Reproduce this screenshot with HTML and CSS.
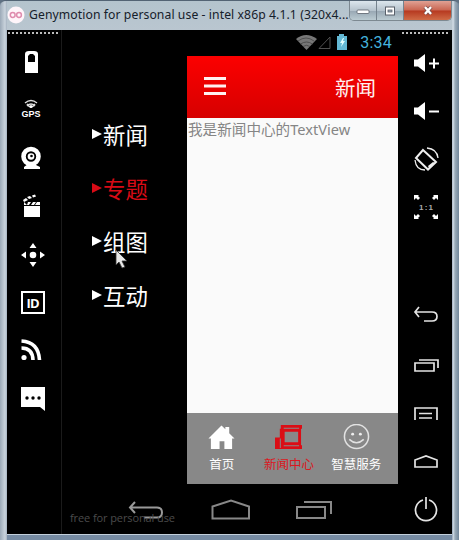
FILE: index.html
```html
<!DOCTYPE html>
<html lang="zh-CN">
<head>
<meta charset="utf-8">
<title>Genymotion</title>
<link rel="stylesheet" href="styles.css">
</head>
<body>
<div class="window">
  <header class="titlebar">
    <svg class="logo" width="18" height="18" viewBox="0 0 18 18"><circle cx="9" cy="9" r="8.5" fill="#fff5fa"/><g fill="none" stroke="#df8cae" stroke-width="1.5"><circle cx="5.7" cy="9" r="2.4"/><circle cx="12" cy="9" r="2.4"/></g></svg>
    <span class="title">Genymotion for personal use - intel x86p 4.1.1 (320x4...</span>
    <div class="controls">
      <span class="ctl"><svg width="16" height="12"><rect x="2" y="5" width="12" height="3.5" rx="1" fill="#fff" stroke="#59616b" stroke-width=".8"/></svg></span>
      <span class="ctl"><svg width="16" height="12"><rect x="3.5" y="2" width="9" height="8" fill="#fff" stroke="#59616b"/><rect x="6" y="5" width="4" height="2" fill="#9aa7b5" stroke="#59616b" stroke-width=".8"/></svg></span>
      <span class="ctl close"><svg width="16" height="12"><path d="M5 2l6 7M11 2L5 9" stroke="#7b4b48" stroke-width="4"/><path d="M5 2l6 7M11 2L5 9" stroke="#fff" stroke-width="2.4"/></svg></span>
    </div>
  </header>
  <main class="body">
    <aside class="tools left">
      <svg viewBox="0 0 48 48"><path fill="#fff" fill-rule="evenodd" d="M18 35V16q0-3 4-3h5q4 0 4 3v19zM21 18v6h7v-6l-2-2h-3z"/></svg>
      <svg viewBox="0 0 48 48"><g fill="none" stroke="#ddd" stroke-width="1.4"><path d="M18 17q6-5 12 0M20 20q4-4 8 0M20 18q4 6 8 0"/></g><circle cx="24" cy="20.5" r="1.5" fill="#fff"/><text class="gps" x="24" y="31" text-anchor="middle" textLength="19" lengthAdjust="spacingAndGlyphs">GPS</text></svg>
      <svg viewBox="0 0 48 48"><circle cx="24" cy="22.500" r="7.500" fill="none" stroke="#fff" stroke-width="4.600"/><circle cx="24" cy="22.500" r="3.300" fill="#fff"/><circle cx="24.500" cy="22" r="1.300" fill="#000"/><path d="M21 30h6l6 3v2H17v-2z" fill="#fff"/></svg>
      <svg viewBox="0 0 48 48"><path fill="#fff" d="M17 24h16v11H17zM17 20l3 3h-3zM21 20h3l-2 3h-2zM26 20h3l-2 3h-3zM30 20h3v3h-5zM16 18l3-2 2 2-4 2zM20 15l3-1 2 2-3 1zM25 13.500l3-1 1 2-3 1z"/></svg>
      <svg viewBox="0 0 48 48"><g fill="#fff"><circle cx="26" cy="25" r="3.300"/><path d="M26 13l3.500 5h-7zM26 37l3.500-5h-7zM14 25l5-3.500v7zM38 25l-5-3.500v7z"/></g></svg>
      <svg viewBox="0 0 48 48"><rect x="15" y="14" width="22" height="21" fill="none" stroke="#fff" stroke-width="2"/><text class="idt" x="26" y="30" text-anchor="middle" textLength="13">ID</text></svg>
      <svg viewBox="0 0 48 48"><circle cx="17" cy="31.500" r="2.600" fill="#fff"/><path d="M14.500 22q11 0 11.500 12M14.500 15q17 1 18 19" fill="none" stroke="#fff" stroke-width="3.600"/></svg>
      <svg viewBox="0 0 48 48"><path d="M14 13h24v24l-5-4H14z" fill="#fff"/><g fill="#000"><circle cx="20" cy="24" r="1.700"/><circle cx="26" cy="24" r="1.700"/><circle cx="32" cy="24" r="1.700"/></g></svg>
    </aside>
    <section class="device">
      <div class="status">
        <svg width="56" height="18" viewBox="0 0 56 18"><path d="M2 6q10-8 21 0L12.500 17z" fill="#777"/><path d="M4 8q8-6 16 0M6.500 11q6-4 12 0M9 13.500q3.500-2.500 7 0" fill="none" stroke="#444" stroke-width=".8"/><path d="M25 15.500L36 4v11.500z" fill="none" stroke="#505050"/><path d="M43 3h2V1h5v2h3v14H43z" fill="#64b9d5"/><path d="M49 5l-3 5h2l-1 4 4-6h-2l1-3z" fill="#e2ffff"/></svg>
        <time>3:34</time>
      </div>
      <div class="screen">
        <nav class="menu">
          <div class="entry"><i></i>新闻</div>
          <div class="entry on"><i></i>专题</div>
          <div class="entry"><i></i>组图
            <svg class="cursor" width="14" height="20" viewBox="0 0 14 20"><path d="M2 1v15l3-3 3 6 3-1-3-6h5z" fill="#e8e8e8" stroke="#333" stroke-width=".8"/></svg>
          </div>
          <div class="entry"><i></i>互动</div>
        </nav>
        <div class="app">
          <div class="appbar">
            <svg width="24" height="20" viewBox="0 0 24 20"><path d="M1 2.500h22M1 10h22M1 17.500h22" stroke="#fff0f0" stroke-width="2.800"/></svg>
            <h1>新闻</h1>
          </div>
          <div class="content">我是新闻中心的TextView</div>
          <div class="tabs">
            <div class="tab"><svg viewBox="0 0 28 28"><path d="M.5 15L14 1.500l4 4V3h4v6.500l5.500 5.500H25v11h-8v-8h-5v8H3V15z" fill="#fff"/></svg><span>首页</span></div>
            <div class="tab on"><svg viewBox="0 0 28 28"><path fill="#db0d15" fill-rule="evenodd" d="M6 1h22v4h-1v17h1v4H0V14h5V5H6zM9 4v1h16V4zM10 8v11h14V8zM9 22v1h16v-1zM5 15v10h1V15z"/></svg><span>新闻中心</span></div>
            <div class="tab"><svg viewBox="0 0 28 28"><g fill="none" stroke="#e2e2e2" stroke-width="1.600"><circle cx="14" cy="13" r="12.500"/><path d="M6.500 16q7.500 7 15 0"/></g><circle cx="10" cy="10.500" r="1.500" fill="#eee"/><circle cx="18" cy="10.500" r="1.500" fill="#eee"/></svg><span>智慧服务</span></div>
          </div>
        </div>
      </div>
      <footer class="navbar">
        <span class="watermark">free for personal use</span>
        <svg width="40" height="24" viewBox="0 0 40 24"><path d="M8 3L3 8.500 8 14M3 8.500h27q5 0 5 5t-5 5H17" fill="none" stroke="#999" stroke-width="2"/></svg>
        <svg width="40" height="24" viewBox="0 0 40 24"><path d="M1.500 19.500V7.500L20 1.500l18 6v12z" fill="none" stroke="#888" stroke-width="2"/></svg>
        <svg width="40" height="24" viewBox="0 0 40 24"><path d="M2 8h28v11H2zM9 3h27v12" fill="none" stroke="#888" stroke-width="2"/></svg>
      </footer>
    </section>
    <aside class="tools right">
      <svg viewBox="0 0 48 48"><path d="M12 19.500h4L23 14v18l-7-5.500h-4z" fill="#fff"/><path d="M27 23.500h10M32 18.500v10" stroke="#fff" stroke-width="2"/></svg>
      <svg viewBox="0 0 48 48"><path d="M12 19.500h4L23 14v18l-7-5.500h-4z" fill="#fff"/><path d="M27 23.500h10" stroke="#fff" stroke-width="2"/></svg>
      <svg viewBox="0 0 48 48"><g fill="none" stroke="#eee" stroke-width="2"><path d="M21 14l13 12-8 7.500L14 22z"/><path d="M25 12q10 1 11 10M13 24q1 10 10 10" stroke-width="1.300"/></g><path d="M26 30l5-4 2 1-6 5z" fill="#eee"/></svg>
      <svg viewBox="0 0 48 48"><path fill="#fff" d="M12 11h5l-1 1 2 2-2 2-2-2-2 2zM36 11h-5l1 1-2 2 2 2 2-2 2 2zM12 35h5l-1-1 2-2-2-2-2 2-2-2zM36 35h-5l1-1-2-2 2-2 2 2 2-2z"/><text class="ratio" x="24" y="26" text-anchor="middle" textLength="14">1:1</text></svg>
      <svg class="apart" viewBox="0 0 48 48"><path d="M17 13l-4 5 4 5M13 18h17q5 0 5 4.500T30 27h-8" fill="none" stroke="#e4e4e4" stroke-width="1.700"/></svg>
      <svg viewBox="0 0 48 48"><path d="M13 21h19v8H13zM17 18h19v8" fill="none" stroke="#e4e4e4" stroke-width="1.700"/></svg>
      <svg viewBox="0 0 48 48"><path d="M13 30V18h22v12M17 23.500h13M17 28h13" fill="none" stroke="#e4e4e4" stroke-width="1.700"/></svg>
      <svg viewBox="0 0 48 48"><path d="M13 29v-7l11-4 11 4v7z" fill="none" stroke="#e4e4e4" stroke-width="1.700"/></svg>
      <svg viewBox="0 0 48 48"><path d="M21 14a10.500 10.500 0 1 0 6 0M24 11v12" fill="none" stroke="#e4e4e4" stroke-width="1.700"/></svg>
    </aside>
  </main>
</div>
</body>
</html>
```
FILE: styles.css
```css
* { box-sizing: border-box; }
body { margin: 0; background: #5f7183; }
svg { display: block; flex: none; }
.window {
  width: 459px; height: 540px; padding: 0 7px 6px; overflow: hidden;
  border: 1px solid #536474; border-radius: 6px 6px 0 0;
  border-width: 1px 0 0;
  background: linear-gradient(90deg, #9ba9b7, #c9d3dc 5px, #a5b2c0 7px, transparent 7px, transparent 452px, #d7e1ea 453px, #9aabb9 455px, #71869a),
    linear-gradient(#b4c4cd, #bac6d0 6%, #8492a9 60%, #768ba3);
  font-family: "Noto Sans", "Noto Sans CJK SC", sans-serif;
}
.titlebar { height: 29px; display: flex; align-items: flex-start; }
.logo { margin-top: 5px; }
.title {
  width: 325px; margin: 5px 0 0 4px; font-size: 12.200px; line-height: 18px;
  letter-spacing: .08px; color: #15202a; white-space: nowrap;
}
.controls { display: flex; width: 103px; height: 20px; border: 1px solid #7d8991; border-top: 0; border-radius: 0 0 5px 5px; overflow: hidden; margin-left: -4px; }
.ctl { width: 27px; display: flex; align-items: center; justify-content: center; background: linear-gradient(#dce6ed, #b6c3cd 50%, #97a6b2 51%, #bbcbd2); border-right: 1px solid #75828d; }
.close { flex: 1; border: 0; background: linear-gradient(#e0a194, #ca6652 48%, #b63920 52%, #cf6b46); }
.body { display: flex; width: 445px; height: 504px; background: #000; box-shadow: 0 1px #c3d0dc; }
.tools { flex: none; position: relative; background: #000; }
.tools::before { content: ""; display: block; height: 2px; margin: 2px 1px -4px; background: repeating-linear-gradient(90deg, #bbb 0 2px, transparent 2px 4px); }
.tools svg { width: 48px; height: 48px; }
.left { width: 55px; padding-top: 0; border-right: 1px solid #1b1b1b; }
.left svg:first-of-type { margin-top: 8px; }
.right { width: 54px; padding-left: 4px; }
.right::before { margin-left: 0; margin-right: 3px; }
.right svg:first-of-type { margin-top: 10px; }
.right .apart { margin-top: 62px; }
.gps { font: 700 8.500px "Liberation Sans", sans-serif; fill: #fff; }
.idt { font: 700 13px "Open Sans", sans-serif; fill: #fff; }
.ratio { font: 700 8px "Liberation Sans", sans-serif; fill: #aaa; }
.device { width: 336px; display: flex; flex-direction: column; }
.status { height: 26px; padding: 3px 6px 0 0; display: flex; justify-content: flex-end; gap: 10px; }
.status time { font: 16px/20px Roboto, sans-serif; color: #45b2dc; letter-spacing: .2px; }
.screen { display: flex; height: 428px; }
.menu { width: 125px; padding: 53px 0 0 30px; }
.entry { position: relative; height: 53.500px; display: flex; align-items: center; font-size: 22.400px; line-height: 53px; color: #fff; }
.entry i { border: 5.500px solid transparent; border-left: 10px solid currentColor; border-right: 0; margin: -3px 1px 0 0; }
.entry.on { color: #d80b16; }
.cursor { position: absolute; left: 22px; top: 33px; }
.app { width: 211px; display: flex; flex-direction: column; background: #fafafa; }
.appbar { height: 62px; padding: 0 22px 2px 16px; display: flex; align-items: center; justify-content: space-between; background: linear-gradient(#fc0000, #d60000); color: #fff0f0; }
.appbar h1 { margin: 2px 0 0; font-size: 20.500px; font-weight: 400; }
.content { flex: 1; padding-left: 1px; font-size: 14.600px; line-height: 22px; color: #858585; white-space: nowrap; }
.tabs { height: 71px; display: flex; background: #888; padding: 0 0 0 1px; }
.tab { width: 67.300px; padding-top: 11px; display: flex; flex-direction: column; align-items: center; font-size: 12.500px; line-height: 16px; color: #fff; white-space: nowrap; }
.tab svg { width: 27px; height: 27px; margin-bottom: 6px; }
.tab.on { color: #dc1720; }
.navbar { height: 50px; padding: 15px 0 0 65px; display: flex; gap: 44px; position: relative; }
.watermark { position: absolute; left: 8px; top: 26px; font: 11px/16px "Open Sans", sans-serif; color: #4b4b4b; letter-spacing: -.1px; }
```
